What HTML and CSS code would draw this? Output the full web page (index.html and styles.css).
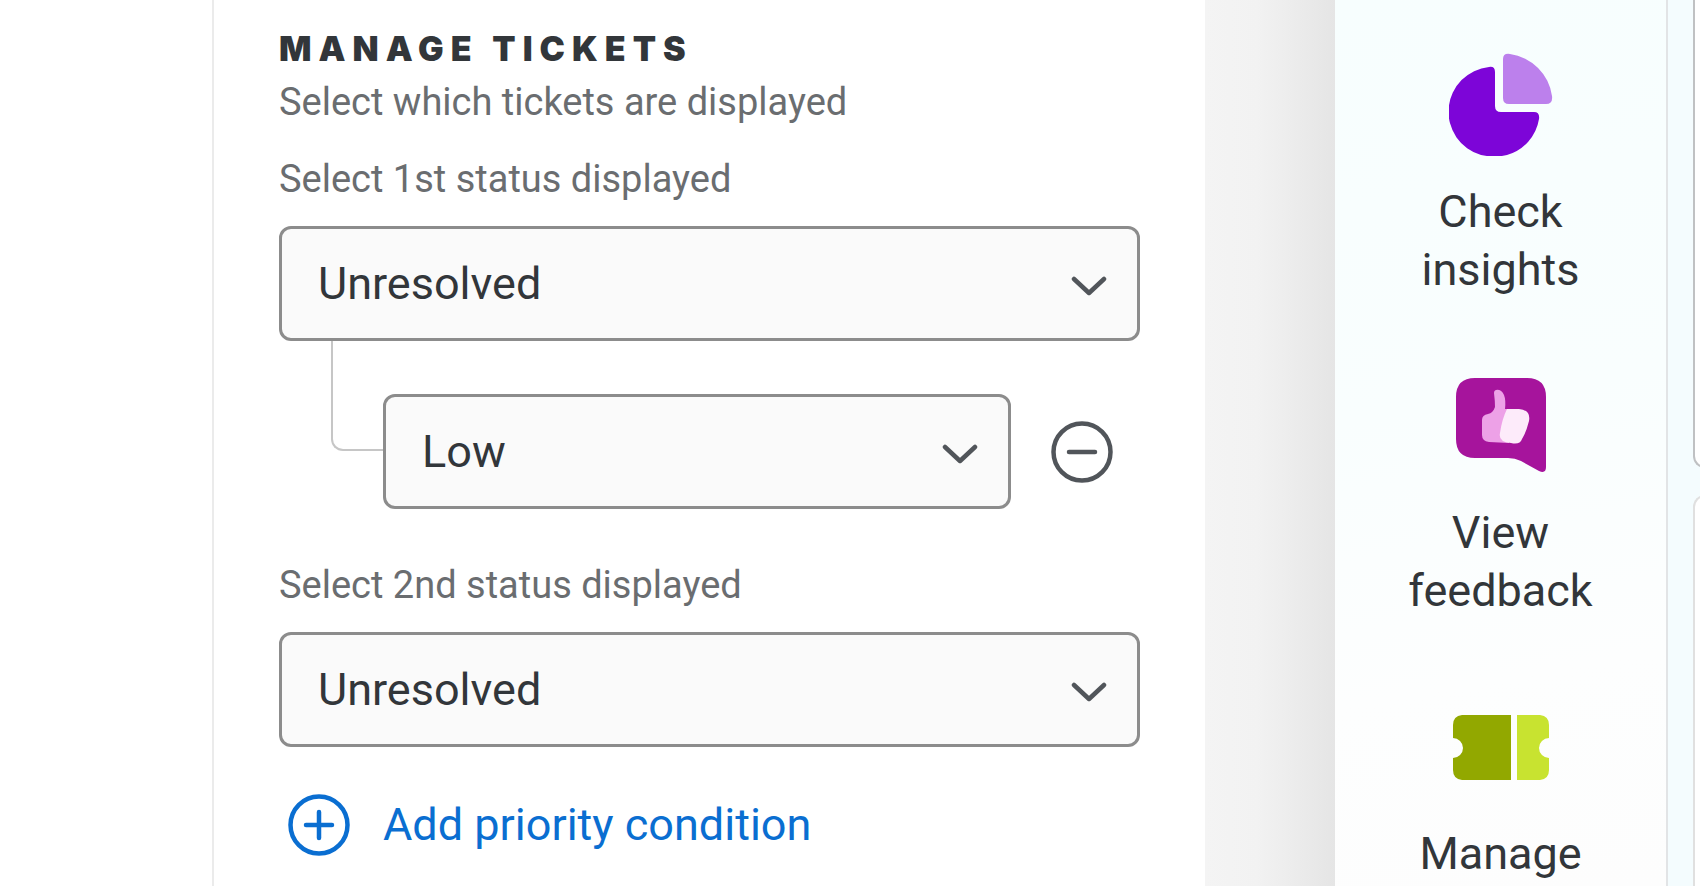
FILE: index.html
```html
<!DOCTYPE html>
<html lang="en">
<head>
    <meta charset="UTF-8">
    <meta name="viewport" content="width=device-width, initial-scale=1.0">
    <title>Manage Tickets</title>
    <link rel="stylesheet" href="styles.css">
</head>
<body>
    <div class="page">
        <!-- Settings panel -->
        <main class="panel">
            <h1 class="panel-title">Manage Tickets</h1>
            <p class="panel-text">Select which tickets are displayed</p>

            <label class="field-label" for="status1">Select 1st status displayed</label>
            <div class="select-box">
                <select id="status1">
                    <option>Unresolved</option>
                </select>
                <svg class="chevron" viewBox="0 0 36 28" aria-hidden="true"><path d="M3 9 L18 23 L33 9"/></svg>
            </div>

            <div class="condition">
                <div class="connector"></div>
                <div class="select-box">
                    <select id="priority1" aria-label="Priority">
                        <option>Low</option>
                    </select>
                    <svg class="chevron" viewBox="0 0 36 28" aria-hidden="true"><path d="M3 9 L18 23 L33 9"/></svg>
                </div>
                <button class="remove" type="button" aria-label="Remove condition">
                    <svg class="round-icon" viewBox="0 0 62 62"><circle cx="31" cy="31" r="28.5"/><path d="M18 31 H44"/></svg>
                </button>
            </div>

            <label class="field-label" for="status2">Select 2nd status displayed</label>
            <div class="select-box">
                <select id="status2">
                    <option>Unresolved</option>
                </select>
                <svg class="chevron" viewBox="0 0 36 28" aria-hidden="true"><path d="M3 9 L18 23 L33 9"/></svg>
            </div>

            <button class="add" type="button">
                <svg class="round-icon" viewBox="0 0 62 62" aria-hidden="true"><circle cx="31" cy="31" r="28.5"/><path d="M18 31 H44 M31 18 V44"/></svg>
                Add priority condition
            </button>
        </main>

        <div class="shade"></div>

        <!-- Navigation -->
        <nav class="nav">
            <a class="nav-item" href="#insights">
                <svg class="nav-icon" viewBox="-1 0 104 104" aria-hidden="true">
                    <path fill="#7d05d8" d="M39 15 Q45 14 45 20 V54 Q45 60 51 60 H84 Q90 60 89 67 A45 45 0 0 1 57 103 Q45 106 31 103 A45 45 0 0 1 39 15 Z"/>
                    <path fill="#bc80ec" d="M53 7 Q53 1 60 2 A49 49 0 0 1 102 44 Q103 52 96 52 H59 Q53 52 53 46 Z"/>
                </svg>
                <span>Check<br>insights</span>
            </a>
            <a class="nav-item" href="#feedback">
                <svg class="nav-icon" viewBox="0 0 104 104" aria-hidden="true">
                    <path fill="#a6149c" d="M26 5 H78 Q97 5 97 24 V94 Q97 101 90 98 L72 88 Q66 85 59 85 H26 Q7 85 7 66 V24 Q7 5 26 5 Z"/>
                    <path fill="#eda1e7" d="M45 20 C45 15 53 16 55 22 Q57 27 56 36 H62 L60 70 L40 69 Q33 68 33 62 V47 Q33 42 39 41 Q44 40 46 34 Q46 28 45 20 Z"/>
                    <path fill="#fdebfa" d="M58 36 H70 Q82 37 80 48 Q77 60 73 66 Q71 72 62 70 Q49 69 51 60 Q53 46 58 36 Z"/>
                </svg>
                <span>View<br>feedback</span>
            </a>
            <a class="nav-item" href="#manage">
                <svg class="nav-icon" viewBox="0 1 104 104" aria-hidden="true">
                    <path fill="#92a800" d="M13 22 H62 V87 H13 Q4 86 4 77 V65 A10 10 0 0 0 4 45 V32 Q4 23 13 22 Z"/>
                    <path fill="#c8e330" d="M68 22 H91 Q100 23 100 32 V45 A10 10 0 0 0 100 65 V77 Q100 86 91 87 H68 Z"/>
                </svg>
                <span>Manage</span>
            </a>
        </nav>

        <div class="cards">
            <div class="card card-top"></div>
            <div class="card card-bottom"></div>
        </div>
    </div>
</body>
</html>
```

FILE: styles.css
```css
* {
    box-sizing: border-box;
}
body {
    margin: 0;
    font-family: Roboto, "Liberation Sans", sans-serif;
    color: #32363a;
    background: #fff;
}
.page {
    display: grid;
    grid-template-columns: minmax(0, 1fr) 130px 333px 32px;
    min-height: 100vh;
    padding-left: 212px;
}

/* Settings panel */
.panel {
    border-left: 2px solid #ebebeb;
    padding: 28px 65px 20px 65px;
}
.panel-title {
    margin: 0;
    font-family: Inter, sans-serif;
    font-size: 34px;
    font-weight: 900;
    line-height: 42px;
    letter-spacing: 7px;
    text-transform: uppercase;
}
.panel-text,
.field-label {
    display: block;
    margin: 0;
    font-size: 38px;
    line-height: 48px;
    color: #6a6d70;
}
.panel-text {
    margin: 8px 0 29px;
}
.field-label {
    margin-bottom: 23px;
}

/* Drop-downs: the chevron shares the grid cell with the select */
.select-box {
    display: grid;
    align-items: center;
}
.select-box select {
    grid-area: 1 / 1;
    appearance: none;
    width: 100%;
    height: 115px;
    padding: 0 36px;
    border: 3px solid #8c8c8c;
    border-radius: 12px;
    background: #fafafa;
    color: #32363a;
    font-family: inherit;
    font-size: 45px;
}
.chevron {
    grid-area: 1 / 1;
    justify-self: end;
    width: 36px;
    height: 28px;
    margin-right: 33px;
    fill: none;
    stroke: #51555a;
    stroke-width: 4.5;
    stroke-linecap: round;
    stroke-linejoin: round;
    pointer-events: none;
}

/* Nested priority condition */
.condition {
    display: grid;
    grid-template-columns: 52px minmax(0, 1fr) auto;
    align-items: end;
    margin-bottom: 52px;
    padding: 0 27px 0 52px;
}
.connector {
    align-self: start;
    height: 110px;
    border-left: 2px solid #c6c6c6;
    border-bottom: 2px solid #c6c6c6;
    border-bottom-left-radius: 12px;
}
.condition .select-box {
    margin-top: 53px;
}
.remove {
    height: 115px;
    margin-left: 40px;
    padding: 0;
    border: 0;
    background: none;
    color: #51555a;
}
.round-icon {
    display: block;
    width: 62px;
    height: 62px;
    fill: none;
    stroke: currentColor;
    stroke-width: 4.5;
    stroke-linecap: round;
}
.add {
    display: flex;
    align-items: center;
    gap: 33px;
    margin-top: 47px;
    padding: 0 9px;
    border: 0;
    background: none;
    color: #0a6ed1;
    font-family: inherit;
    font-size: 45px;
    line-height: 62px;
}

/* Space beside the panel, shaded by the navigation */
.shade {
    background: linear-gradient(to right, #f4f4f4, #f2f2f2 40%, #e5e5e5);
}

/* Navigation */
.nav {
    display: flex;
    flex-direction: column;
    gap: 74px;
    padding-top: 52px;
    border-right: 2px solid #e2e4e6;
    background: linear-gradient(170deg, #f7fefe, #f9fefe 45%, #fdfefe 75%, #fdfdfd);
}
.nav-item {
    display: flex;
    flex-direction: column;
    align-items: center;
    gap: 27px;
    color: #32363a;
    font-size: 45px;
    line-height: 58px;
    text-align: center;
    text-decoration: none;
}
.nav-icon {
    width: 104px;
    height: 104px;
}

/* Page cards cut off by the window edge */
.cards {
    display: grid;
    grid-template-rows: 468px 1fr;
    gap: 27px;
    padding-left: 25px;
    background: #f4fcfe;
    overflow: hidden;
}
.card {
    width: 100px;
    border-left: 2px solid #bfc1c3;
    background: #fff;
}
.card-top {
    border-bottom: 2px solid #bfc1c3;
    border-bottom-left-radius: 12px;
}
.card-bottom {
    border-color: #e0e0e0;
    border-top: 2px solid #e0e0e0;
    border-top-left-radius: 12px;
}
```
